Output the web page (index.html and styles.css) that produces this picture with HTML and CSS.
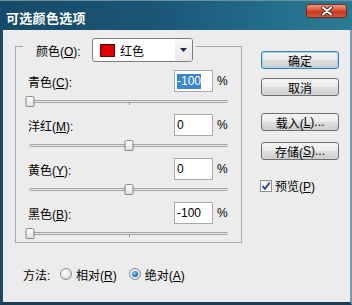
FILE: index.html
```
<!DOCTYPE html>
<html lang="zh-CN">
<head>
<meta charset="utf-8">
<title>可选颜色选项</title>
<link rel="stylesheet" href="styles.css">
</head>
<body>
<div class="window">
  <div class="titlebar">
    <span class="title">可选颜色选项</span>
    <span class="close">
      <svg width="12" height="10" viewBox="0 0 12 10"><path d="M2 1.5 L10 8.5 M10 1.5 L2 8.5" stroke="#5a2418" stroke-width="4" stroke-linecap="round"/><path d="M2 1.5 L10 8.5 M10 1.5 L2 8.5" stroke="#ffffff" stroke-width="2.2" stroke-linecap="round"/></svg>
    </span>
  </div>
  <div class="client">
    <div class="left">
      <fieldset class="group">
        <legend class="legend">
          <div class="legend-inner">
            <span class="legend-label">颜色(<u>O</u>):</span>
            <div class="combo">
              <span class="swatch"></span>
              <span class="combo-text">红色</span>
              <span class="combo-btn"><svg width="7" height="4" viewBox="0 0 7 4"><path d="M0 0 H7 L3.5 4 Z" fill="#1b2a55"/></svg></span>
            </div>
          </div>
        </legend>
        <div class="rows">
          <div class="field">
            <div class="field-row"><span class="field-label">青色(<u>C</u>):</span><div class="num"><span class="sel">-100</span></div><span class="pct">%</span></div>
            <div class="slider"><div class="track"><span class="tick"></span><span class="thumb" style="left:0%"></span></div></div>
          </div>
          <div class="field">
            <div class="field-row"><span class="field-label">洋红(<u>M</u>):</span><div class="num">0</div><span class="pct">%</span></div>
            <div class="slider"><div class="track"><span class="tick"></span><span class="thumb" style="left:50%"></span></div></div>
          </div>
          <div class="field">
            <div class="field-row"><span class="field-label">黄色(<u>Y</u>):</span><div class="num">0</div><span class="pct">%</span></div>
            <div class="slider"><div class="track"><span class="tick"></span><span class="thumb" style="left:50%"></span></div></div>
          </div>
          <div class="field">
            <div class="field-row"><span class="field-label">黑色(<u>B</u>):</span><div class="num">-100</div><span class="pct">%</span></div>
            <div class="slider"><div class="track"><span class="tick"></span><span class="thumb" style="left:0%"></span></div></div>
          </div>
        </div>
      </fieldset>
      <div class="method">
        <span class="method-label">方法:</span>
        <span class="radio"></span><span class="radio-text">相对(<u>R</u>)</span>
        <span class="radio radio-on second"></span><span class="radio-text">绝对(<u>A</u>)</span>
      </div>
    </div>
    <div class="right">
      <button class="btn btn-default b-ok">确定</button>
      <button class="btn b-cancel">取消</button>
      <button class="btn b-load">载入(<u>L</u>)...</button>
      <button class="btn b-save">存储(<u>S</u>)...</button>
      <div class="check">
        <span class="check-box"><svg width="10" height="10" viewBox="0 0 10 10"><path d="M1.5 5 L4 7.8 L8.6 1.6" fill="none" stroke="#3a4f91" stroke-width="2"/></svg></span>
        <span class="check-text">预览(<u>P</u>)</span>
      </div>
    </div>
  </div>
</div>
</body>
</html>
```
FILE: styles.css
```
html, body {
  margin: 0;
  padding: 0;
}
body {
  font-family: "Liberation Sans", "Noto Sans CJK SC", sans-serif;
  font-size: 12px;
  color: #000;
  background: #ececec;
}
u {
  text-decoration: underline;
  text-underline-offset: 1px;
}
.window {
  width: 352px;
  height: 305px;
  display: flex;
  flex-direction: column;
}
.titlebar {
  height: 30px;
  flex: none;
  box-sizing: border-box;
  display: flex;
  align-items: flex-start;
  padding: 0 5px 0 6px;
  border-top: 1px solid #6b8fa3;
  background: linear-gradient(to right, #174a68 0%, #1b5677 45%, #24708c 80%, #2b7b94 100%);
}
.title {
  margin-top: 10px;
  color: #fff;
  font-family: "Noto Sans CJK SC", sans-serif;
  font-weight: bold;
  font-size: 13px;
  line-height: 13px;
  letter-spacing: 0.3px;
}
.close {
  margin-left: auto;
  margin-top: 3px;
  width: 41px;
  height: 14px;
  box-sizing: border-box;
  border: 1px solid #7a2a1c;
  border-radius: 3px;
  background: linear-gradient(#ec9a84 0%, #dd5a3e 40%, #c93a22 55%, #d4553a 100%);
  display: flex;
  align-items: center;
  justify-content: center;
}
.client {
  flex: 1;
  display: flex;
  background: #ececec;
  border-left: 3px solid #1b4b67;
  border-right: 2px solid #7d98a8;
  border-bottom: 3px solid #1b3e54;
  padding-left: 12px;
}
.left {
  width: 227px;
  display: flex;
  flex-direction: column;
}
.group {
  margin: 0;
  padding: 0 6px 4px 7px;
  border: 1px solid #a9a9a9;
  min-width: 0;
}
.legend {
  padding: 8px 3px 0 13px;
  margin: 0;
}
.legend-inner {
  display: flex;
  align-items: center;
}
.legend-label {
  width: 56px;
}
.combo {
  width: 101px;
  height: 24px;
  box-sizing: border-box;
  border: 1px solid #7d7d7d;
  border-radius: 3px;
  background: #fff;
  display: flex;
  align-items: center;
  padding-left: 7px;
}
.swatch {
  width: 15px;
  height: 13px;
  box-sizing: border-box;
  border: 1px solid #5b0a0a;
  background: #e00000;
}
.combo-text {
  margin-left: 5px;
  flex: 1;
}
.combo-btn {
  width: 17px;
  align-self: stretch;
  display: flex;
  align-items: center;
  justify-content: center;
  background: linear-gradient(#f7f7f7, #e9e9e9);
  border-radius: 0 2px 2px 0;
}
.rows {
  padding: 8px 6px 0 5px;
}
.field + .field {
  margin-top: 8px;
}
.field-row {
  display: flex;
  align-items: center;
  height: 22px;
}
.field-label {
  flex: 1;
}
.num {
  width: 39px;
  height: 22px;
  box-sizing: border-box;
  border: 1px solid #a6a9ae;
  background: #fff;
  padding-left: 2px;
  display: flex;
  align-items: center;
}
.sel {
  background: #3a86d4;
  color: #fff;
  line-height: 15px;
}
.pct {
  width: 16px;
  box-sizing: border-box;
  padding-left: 4px;
}
.slider {
  height: 14px;
  padding-top: 8px;
  box-sizing: border-box;
}
.track {
  position: relative;
  height: 3px;
  margin: 0 1px;
  box-sizing: border-box;
  border: 1px solid #a3a3a3;
  border-radius: 2px;
  background: #e6e6e6;
}
.tick {
  position: absolute;
  left: 50%;
  top: 1px;
  width: 1px;
  height: 3px;
  background: #8f8f8f;
}
.thumb {
  position: absolute;
  top: -5px;
  width: 9px;
  height: 11px;
  transform: translateX(-50%);
  box-sizing: border-box;
  border: 1px solid #858585;
  border-radius: 2px 2px 1px 1px;
  background: linear-gradient(#ffffff, #e2e2e2);
}
.method {
  display: flex;
  align-items: center;
  height: 16px;
  margin-top: 23px;
  padding-left: 8px;
}
.method-label {
  width: 37px;
}
.radio {
  width: 12px;
  height: 12px;
  box-sizing: border-box;
  border-radius: 50%;
  border: 1px solid #8d8d8d;
  background: radial-gradient(circle at 40% 35%, #ffffff 0%, #e8e8e8 50%, #c9c9c9 100%);
  position: relative;
}
.radio-on::after {
  content: "";
  position: absolute;
  left: 2px;
  top: 2px;
  width: 6px;
  height: 6px;
  border-radius: 50%;
  background: radial-gradient(circle at 40% 35%, #8fd3ff 0%, #2c7fd0 50%, #1a4f9c 100%);
}
.radio-text {
  margin-left: 4px;
}
.second {
  margin-left: 12px;
}
.right {
  margin-left: 19px;
  width: 78px;
  display: flex;
  flex-direction: column;
}
.btn {
  height: 18px;
  box-sizing: border-box;
  border: 1px solid #707070;
  border-radius: 3px;
  background: linear-gradient(#f3f3f3 0%, #ebebeb 50%, #dddddd 52%, #cfcfcf 100%);
  font: inherit;
  color: #000;
  padding: 0;
  display: flex;
  align-items: center;
  justify-content: center;
}
.btn-default {
  border-color: #3c7fb1;
  box-shadow: inset 0 0 0 1px #9fd6ef;
}
.b-ok { margin-top: 21px; }
.b-cancel { margin-top: 9px; }
.b-load { margin-top: 17px; }
.b-save { margin-top: 11px; }
.check {
  display: flex;
  align-items: center;
  margin-top: 17px;
  margin-left: -1px;
}
.check-box {
  width: 12px;
  height: 12px;
  box-sizing: border-box;
  border: 1px solid #8e8f8f;
  background: linear-gradient(#f0f0f0, #ffffff);
  display: flex;
  align-items: center;
  justify-content: center;
}
.check-text {
  margin-left: 3px;
}
```
